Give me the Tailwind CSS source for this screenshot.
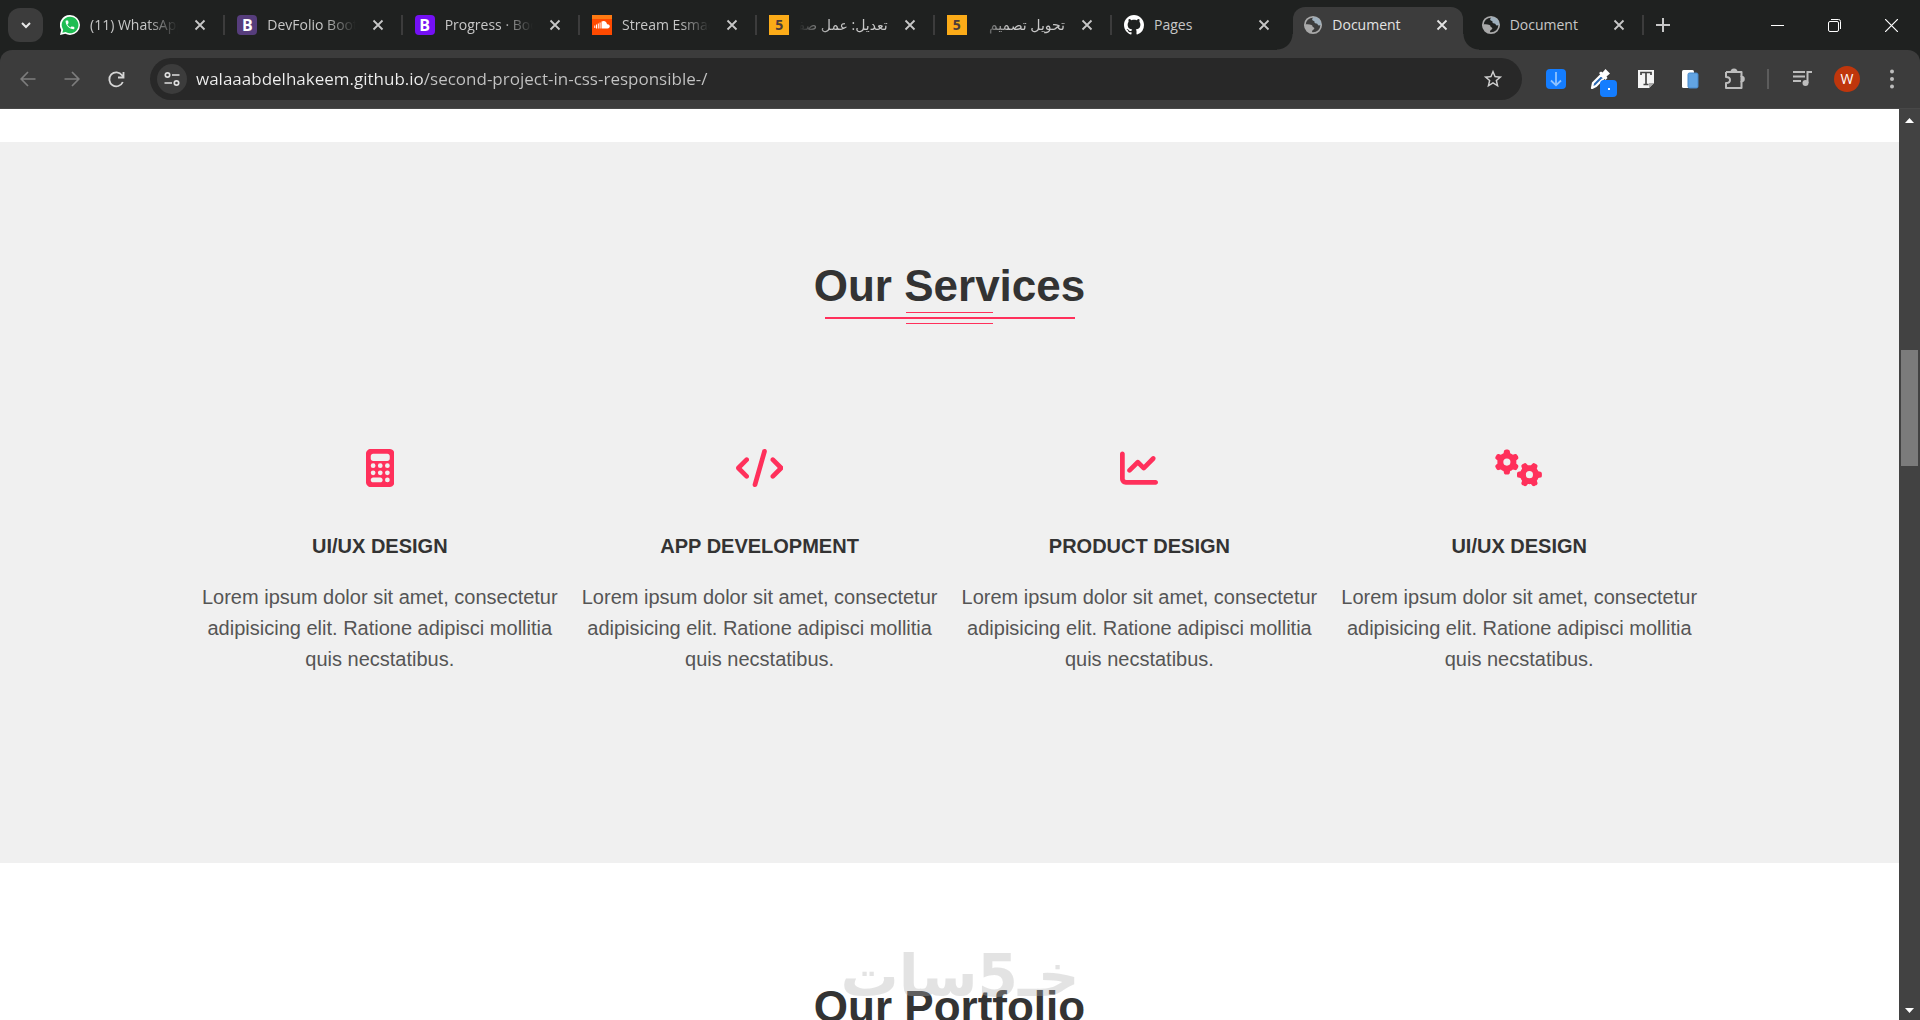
<!DOCTYPE html>
<html lang="en">
<head>
    <meta charset="UTF-8" />
    <meta name="viewport" content="width=device-width, initial-scale=1.0" />
    <title>Document</title>
    <script src="https://cdn.jsdelivr.net/npm/@tailwindcss/browser@4"></script>
</head>
<body class="relative flex h-screen flex-col overflow-hidden bg-white font-['Liberation_Sans',Arial,sans-serif]">

<!-- Shared icons -->
<svg class="hidden">
    <symbol id="x" viewBox="0 0 12 12"><path d="M1.5 1.5l9 9M10.500 1.500l-9 9" fill="none" stroke="currentColor" stroke-width="1.8" /></symbol>
    <symbol id="globe" viewBox="0 0 20 20">
        <circle cx="10" cy="10" r="8.200" fill="none" stroke="currentColor" stroke-width="1.700" />
        <path d="M10.500 2c-1 1.500-1.800 2-1 3.200 1 .8 2.200.3 2 1.800-.1 1.200.8 1.500 2 1.400 1.200 0 1.200 1.800 2.500 2.200l2.200-.6C18.500 5.500 15 2 10.500 2z" fill="#9fb0bd" />
        <path d="M2 9.500c2.500-.3 5-.2 6.500.5 1.500.8.500 1.800 1.800 2.300 1.500.4 1.200 1.700.3 2.200-1.200.7-1.700 1.600-1.600 3.300C5 17.500 1.800 14 2 9.500z" fill="currentColor" />
    </symbol>
    <symbol id="gear" viewBox="0 0 320 352"><path fill-rule="evenodd" d="M308.500 135.300c7.100-6.300 9.900-16.200 6.200-25c-2.300-5.300-4.800-10.500-7.600-15.500L304 89.400c-3-5-6.300-9.900-9.800-14.600c-5.700-7.600-15.700-10.100-24.700-7.100l-28.200 9.300c-10.700-8.800-23-16-36.200-20.900L199 27.100c-1.900-9.300-9.100-16.700-18.500-17.800C173.900 8.400 167.200 8 160.400 8h-.7c-6.800 0-13.500 .4-20.100 1.200c-9.400 1.100-16.600 8.600-18.500 17.800L115 56.100c-13.300 5-25.500 12.100-36.200 20.900L50.500 67.800c-9-3-19-.5-24.700 7.100c-3.500 4.700-6.800 9.600-9.900 14.600l-3 5.300c-2.800 5-5.300 10.200-7.600 15.600c-3.700 8.700-.9 18.600 6.200 25l22.200 19.800C32.600 161.900 32 168.900 32 176s.6 14.100 1.700 20.900L11.500 216.700c-7.100 6.300-9.900 16.200-6.200 25c2.300 5.300 4.800 10.500 7.600 15.600l3 5.200c3 5.100 6.300 9.900 9.900 14.600c5.700 7.600 15.700 10.100 24.700 7.100l28.200-9.300c10.700 8.800 23 16 36.200 20.900l6.100 29.100c1.900 9.300 9.100 16.700 18.500 17.800c6.700 .8 13.500 1.200 20.400 1.200s13.700-.4 20.400-1.200c9.400-1.100 16.600-8.600 18.500-17.800l6.100-29.100c13.300-5 25.500-12.100 36.200-20.900l28.200 9.300c9 3 19 .5 24.700-7.100c3.500-4.700 6.800-9.500 9.800-14.600l3.100-5.400c2.800-5 5.300-10.200 7.600-15.500c3.700-8.700 .9-18.600-6.200-25l-22.200-19.800c1.100-6.800 1.700-13.800 1.700-20.900s-.6-14.100-1.700-20.900l22.200-19.800zM112 176a48 48 0 1 1 96 0 48 48 0 1 1 -96 0z" /></symbol>
</svg>

<!-- Tab strip -->
<header class="flex h-[50px] shrink-0 items-center bg-[#1f2120] font-['Open_Sans','Noto_Sans','DejaVu_Sans',sans-serif] text-sm text-[#c7c7c7]">
    <button aria-label="Search tabs" class="ml-2 mr-[5px] flex h-[34px] w-[35px] shrink-0 items-center justify-center rounded-xl bg-[#3c3c3c]">
        <svg class="size-3" viewBox="0 0 12 12" fill="none" stroke="#e8e8e8" stroke-width="2"><path d="M2 4l4 4 4-4" /></svg>
    </button>
    <nav class="grid h-full w-[1596px] grid-cols-9 items-center">
        <div class="flex h-5 items-center border-r-2 border-[#3c3c3c] pl-3 pr-[17px]">
            <svg class="size-5 shrink-0" viewBox="0 0 24 24"><path d="M12 0a12 12 0 0 1 0 24c-2.100 0-4-.5-5.700-1.400L0 24l1.500-6A12 12 0 0 1 12 0z" fill="#fff" /><path d="M12 2a10 10 0 1 1-5.300 18.400L2.800 21.300l1-3.700A10 10 0 0 1 12 2z" fill="#1fbd53" /><path transform="translate(5 5) scale(.58)" d="M6.620 10.790c1.440 2.830 3.760 5.140 6.590 6.590l2.200-2.200c.27-.27.67-.36 1.020-.24 1.120.37 2.330.57 3.570.57.55 0 1 .45 1 1V20c0 .55-.45 1-1 1-9.390 0-17-7.610-17-17 0-.55.45-1 1-1h3.500c.55 0 1 .45 1 1 0 1.250.2 2.450.57 3.570.11.35.03.74-.25 1.020l-2.200 2.200z" fill="#fff" /></svg>
            <a href="#" class="ml-[10px] min-w-0 flex-1 overflow-hidden whitespace-nowrap [mask-image:linear-gradient(to_right,#000_65%,transparent)]">(11) WhatsApp</a>
            <button aria-label="Close tab" class="ml-4"><svg class="size-3"><use href="#x" /></svg></button>
        </div>
        <div class="flex h-5 items-center border-r-2 border-[#3c3c3c] pl-3 pr-[17px]">
            <span class="flex size-5 shrink-0 items-center justify-center rounded-sm bg-[#563d7c] text-base font-bold text-white">B</span>
            <a href="#" class="ml-[10px] min-w-0 flex-1 overflow-hidden whitespace-nowrap [mask-image:linear-gradient(to_right,#000_65%,transparent)]">DevFolio Bootstrap</a>
            <button aria-label="Close tab" class="ml-4"><svg class="size-3"><use href="#x" /></svg></button>
        </div>
        <div class="flex h-5 items-center border-r-2 border-[#3c3c3c] pl-3 pr-[17px]">
            <span class="flex size-5 shrink-0 items-center justify-center rounded-sm bg-[#7410f5] text-base font-bold text-white">B</span>
            <a href="#" class="ml-[10px] min-w-0 flex-1 overflow-hidden whitespace-nowrap [mask-image:linear-gradient(to_right,#000_65%,transparent)]">Progress · Bootstrap</a>
            <button aria-label="Close tab" class="ml-4"><svg class="size-3"><use href="#x" /></svg></button>
        </div>
        <div class="flex h-5 items-center border-r-2 border-[#3c3c3c] pl-3 pr-[17px]">
            <svg class="size-5 shrink-0" viewBox="0 0 20 20"><path d="M0 0h20v20H0z" fill="#ff4a00" /><path d="M0 0h20v4H0z" fill="#ff7a12" /><path d="M9.500 6.500c3-1.500 5.300.3 5.500 2.700 1.700-.3 2.800.8 2.800 2s-.9 2.200-2.200 2.200H9.500zM7.600 7.500h1v5.900h-1zM5.800 8.500h1v4.900h-1zM4 9.500h1v3.900H4zM2.300 10.500h1v2.500h-1z" fill="#fff" /></svg>
            <a href="#" class="ml-[10px] min-w-0 flex-1 overflow-hidden whitespace-nowrap [mask-image:linear-gradient(to_right,#000_65%,transparent)]">Stream Esmaeel</a>
            <button aria-label="Close tab" class="ml-4"><svg class="size-3"><use href="#x" /></svg></button>
        </div>
        <div class="flex h-5 items-center border-r-2 border-[#3c3c3c] pl-3 pr-[17px]">
            <span class="flex size-5 shrink-0 items-center justify-center bg-[#fbab18] text-sm font-bold text-[#4a3b3b]">5</span>
            <a href="#" dir="rtl" class="ml-[10px] min-w-0 flex-1 overflow-hidden whitespace-nowrap [mask-image:linear-gradient(to_left,#000_65%,transparent)]">تعديل: عمل صفحة</a>
            <button aria-label="Close tab" class="ml-4"><svg class="size-3"><use href="#x" /></svg></button>
        </div>
        <div class="flex h-5 items-center border-r-2 border-[#3c3c3c] pl-3 pr-[17px]">
            <span class="flex size-5 shrink-0 items-center justify-center bg-[#fbab18] text-sm font-bold text-[#4a3b3b]">5</span>
            <a href="#" dir="rtl" class="ml-[10px] min-w-0 flex-1 overflow-hidden whitespace-nowrap [mask-image:linear-gradient(to_left,#000_65%,transparent)]">تحويل تصميم</a>
            <button aria-label="Close tab" class="ml-4"><svg class="size-3"><use href="#x" /></svg></button>
        </div>
        <div class="flex h-5 items-center pl-3 pr-[19px]">
            <svg class="size-5 shrink-0" viewBox="0 0 16 16" fill="#fff"><path d="M8 0C3.580 0 0 3.580 0 8c0 3.540 2.290 6.530 5.470 7.590.4.07.55-.17.55-.38 0-.19-.01-.82-.01-1.490-2.010.37-2.530-.49-2.690-.94-.09-.23-.48-.94-.82-1.130-.28-.15-.68-.52-.01-.53.63-.01 1.080.58 1.230.82.72 1.210 1.870.87 2.330.66.07-.52.28-.87.51-1.070-1.780-.2-3.640-.89-3.640-3.950 0-.87.31-1.590.82-2.150-.08-.2-.36-1.020.08-2.120 0 0 .67-.21 2.200.82.64-.18 1.320-.27 2-.27s1.360.09 2 .27c1.530-1.040 2.200-.82 2.200-.82.44 1.100.16 1.920.08 2.120.51.56.82 1.270.82 2.150 0 3.070-1.870 3.750-3.650 3.950.29.25.54.73.54 1.480 0 1.070-.01 1.930-.01 2.200 0 .21.15.46.55.38A8.010 8.010 0 0 0 16 8c0-4.420-3.580-8-8-8z" /></svg>
            <a href="#" class="ml-[10px] min-w-0 flex-1 overflow-hidden whitespace-nowrap">Pages</a>
            <button aria-label="Close tab" class="ml-4"><svg class="size-3"><use href="#x" /></svg></button>
        </div>
        <!-- Active tab, with the curved feet on both sides -->
        <div class="relative mx-1 flex h-[43px] items-center self-end rounded-t-xl bg-[#3c3c3c] pb-2 pl-[10px] pr-[15px] text-[#e3e3e3] before:absolute before:-left-4 before:bottom-0 before:size-4 before:bg-[radial-gradient(circle_at_0_0,transparent_15px,#3c3c3c_16px)] after:absolute after:-right-4 after:bottom-0 after:size-4 after:bg-[radial-gradient(circle_at_100%_0,transparent_15px,#3c3c3c_16px)]">
            <svg class="size-5 shrink-0 text-[#a9a9a9]"><use href="#globe" /></svg>
            <a href="#" class="ml-[9px] min-w-0 flex-1 overflow-hidden whitespace-nowrap">Document</a>
            <button aria-label="Close tab" class="ml-4"><svg class="size-3"><use href="#x" /></svg></button>
        </div>
        <div class="flex h-5 items-center border-r-2 border-[#3c3c3c] pl-[14px] pr-[17px]">
            <svg class="size-5 shrink-0 text-[#a9a9a9]"><use href="#globe" /></svg>
            <a href="#" class="ml-[9px] min-w-0 flex-1 overflow-hidden whitespace-nowrap">Document</a>
            <button aria-label="Close tab" class="ml-4"><svg class="size-3"><use href="#x" /></svg></button>
        </div>
    </nav>
    <button aria-label="New tab" class="ml-3">
        <svg class="size-[14px]" viewBox="0 0 14 14" stroke="currentColor" stroke-width="2"><path d="M7 0v14M0 7h14" /></svg>
    </button>
    <div class="ml-auto flex items-center gap-11 pr-[22px] text-white">
        <button aria-label="Minimize"><svg class="size-[13px]" viewBox="0 0 13 13" stroke="currentColor"><path d="M0 6.500h13" /></svg></button>
        <button aria-label="Restore"><svg class="size-[13px]" viewBox="0 0 13 13" fill="none" stroke="currentColor"><rect x=".5" y="2.500" width="10" height="10" rx="1.500" /><path d="M3 .5h7.500a2 2 0 0 1 2 2V10" /></svg></button>
        <button aria-label="Close"><svg class="size-[13px]" viewBox="0 0 13 13" stroke="currentColor" stroke-width="1.200"><path d="M0 0l13 13M13 0L0 13" /></svg></button>
    </div>
</header>

<!-- Toolbar -->
<div class="shrink-0 bg-[#1f2120]">
    <div class="flex h-[59px] items-center rounded-t-xl border-b border-[#484848] bg-[#3c3c3c] pl-5 pr-5">
        <div class="flex gap-7">
            <button aria-label="Back" class="text-[#7d7d7d]"><svg class="size-4" viewBox="0 0 16 16" fill="none" stroke="currentColor" stroke-width="1.700"><path d="M15.500 8H1.500M8 1L1.200 8 8 15" /></svg></button>
            <button aria-label="Forward" class="text-[#7d7d7d]"><svg class="size-4" viewBox="0 0 16 16" fill="none" stroke="currentColor" stroke-width="1.700"><path d="M.5 8h14M8 1l6.800 7L8 15" /></svg></button>
            <button aria-label="Reload" class="text-[#d6d6d6]"><svg class="size-[17px]" viewBox="0 0 17 17" fill="none" stroke="currentColor" stroke-width="1.800"><path d="M14.800 11A7 7 0 1 1 14 4.200l1.500 1.800M15.500 1v5.500H10" /></svg></button>
        </div>
        <div class="ml-[25px] flex h-[42px] flex-1 items-center rounded-full bg-[#282828] pl-[7px] pr-[18px]">
            <button aria-label="Site information" class="flex size-[30px] items-center justify-center rounded-full bg-[#3c3c3c] text-[#dedede]">
                <svg class="size-4" viewBox="0 0 16 16" fill="none" stroke="currentColor" stroke-width="1.700"><circle cx="3.500" cy="4" r="2.200" /><path d="M8 4h7.500M.5 12H8" /><circle cx="12.500" cy="12" r="2.200" /></svg>
            </button>
            <input type="text" aria-label="Address" value="walaaabdelhakeem.github.io/second-project-in-css-responsible-/" class="ml-[9px] min-w-0 flex-1 bg-linear-to-r from-[#f0f0f0] from-[227px] to-[#c4c4c4] to-[227px] bg-clip-text font-['Open_Sans','Noto_Sans',sans-serif] text-[17px] text-transparent outline-none" />
            <button aria-label="Bookmark this page" class="text-[#cfcfcf]"><svg class="size-[22px]" viewBox="0 0 24 24" fill="currentColor"><path d="M22 9.240l-7.190-.62L12 2 9.190 8.630 2 9.240l5.460 4.730L5.820 21 12 17.270 18.180 21l-1.630-7.030L22 9.240zM12 15.400l-3.760 2.270 1-4.280-3.320-2.880 4.380-.38L12 6.100l1.710 4.040 4.380.38-3.320 2.880 1 4.280L12 15.400z" /></svg></button>
        </div>
        <div class="ml-6 flex items-center gap-6 text-[#bdbdbd]">
            <button aria-label="Downloader"><svg class="size-5" viewBox="0 0 20 20"><rect width="20" height="20" rx="4" fill="#147dff" /><path d="M10 3v13M5 11.500l5 4.800 5-4.800" fill="none" stroke="#8fc3ff" stroke-width="1.800" /></svg></button>
            <button aria-label="Color picker" class="relative size-[22px]">
                <svg class="size-5" viewBox="0 0 20 20"><path d="M2 19l1-5 8-8 3 3-8 8z" fill="#2867b2" stroke="#fff" stroke-width="2.200" stroke-linejoin="round" /><path d="M9 4l2-1.500 1.500 1L15.500 0l4.500 4.500-3.500 3 1 1.500-2 2z" fill="#fff" /></svg>
                <span class="absolute left-[10px] top-3 flex size-[17px] items-center justify-center rounded bg-[#147dff]"><span class="size-[2px] bg-white"></span></span>
            </button>
            <button aria-label="Fonts"><svg class="size-5" viewBox="0 0 20 20"><path d="M2 1h16v13l-5 5H2z" fill="#f4f4f4" /><path d="M13 19v-5h5z" fill="#aaa" /><path d="M5 6V3.500h10V6M10 3.500V15M7.500 15.500h5" fill="none" stroke="#444" stroke-width="1.700" /></svg></button>
            <button aria-label="Responsive viewer"><svg class="size-5" viewBox="0 0 20 20"><rect x="2" y="1" width="12" height="18" rx="1.500" fill="#fff" /><rect x="8" y="4" width="10" height="15" rx="1.500" fill="#62a4e3" stroke="#4688ca" /></svg></button>
            <button aria-label="Extensions"><svg class="size-[22px]" viewBox="0 0 22 22" fill="none" stroke="currentColor" stroke-width="2"><path d="M2 4h15.500v5M17.500 13v7H2v-5c2.500 0 4-1 4-3s-1.500-3-4-3V4" stroke-linejoin="round" /><path d="M7.500 4a2.500 2.500 0 0 1 5 0zM17.500 8.800a2.300 2.300 0 0 1 0 4.600z" fill="currentColor" /></svg></button>
        </div>
        <span class="ml-[21px] h-5 w-[2px] bg-[#5c5c5c]"></span>
        <div class="ml-[23px] flex items-center text-[#bdbdbd]">
            <button aria-label="Media controls"><svg class="size-[22px]" viewBox="0 0 22 22"><path d="M1 4h12M1 8.500h12M1 13h8" stroke="currentColor" stroke-width="1.800" /><path d="M15.500 15V4H20" fill="none" stroke="currentColor" stroke-width="2" /><circle cx="13.500" cy="15" r="3" fill="currentColor" /></svg></button>
            <button aria-label="Profile" class="ml-5 flex size-[26px] items-center justify-center rounded-full bg-[#bf360c] font-['Open_Sans',sans-serif] text-sm text-white">W</button>
            <button aria-label="Menu" class="ml-6"><svg class="h-5 w-4" viewBox="0 0 16 20" fill="currentColor"><circle cx="8" cy="2.500" r="2" /><circle cx="8" cy="10" r="2" /><circle cx="8" cy="17.500" r="2" /></svg></button>
        </div>
    </div>
</div>

<div class="flex min-h-0 flex-1">
    <main class="min-w-0 flex-1 overflow-hidden pt-[33px] text-center text-[#333]">

        <!-- Services -->
        <section class="bg-[#f0f0f0] pb-[188px] pt-[119px]">
            <h2 class="text-[44px] font-bold leading-[50px]">Our Services</h2>
            <div class="mt-px flex flex-col items-center gap-1">
                <span class="h-px w-[87px] bg-[#ff305b]"></span>
                <span class="h-[2px] w-[250px] bg-[#ff305b]"></span>
                <span class="h-px w-[87px] bg-[#ff305b]"></span>
            </div>
            <div class="mx-auto mt-[125px] grid w-4/5 grid-cols-4">
                <article class="px-2">
                    <svg class="mx-auto h-[38px] fill-[#ff305b]" viewBox="0 0 384 512"><path d="M64 0C28.700 0 0 28.700 0 64V448c0 35.300 28.700 64 64 64H320c35.300 0 64-28.700 64-64V64c0-35.300-28.700-64-64-64H64zM96 64H288c17.700 0 32 14.300 32 32v32c0 17.700-14.300 32-32 32H96c-17.700 0-32-14.300-32-32V96c0-17.700 14.300-32 32-32zm32 160a32 32 0 1 1 -64 0 32 32 0 1 1 64 0zM96 352a32 32 0 1 1 0-64 32 32 0 1 1 0 64zM64 416c0-17.700 14.300-32 32-32h96c17.700 0 32 14.300 32 32s-14.300 32-32 32H96c-17.700 0-32-14.300-32-32zM192 256a32 32 0 1 1 0-64 32 32 0 1 1 0 64zm32 64a32 32 0 1 1 -64 0 32 32 0 1 1 64 0zm64-64a32 32 0 1 1 0-64 32 32 0 1 1 0 64zm32 64a32 32 0 1 1 -64 0 32 32 0 1 1 64 0zM288 448a32 32 0 1 1 0-64 32 32 0 1 1 0 64z" /></svg>
                    <h3 class="mt-11 text-xl font-bold uppercase leading-[30px]">UI/UX Design</h3>
                    <p class="mt-[21px] text-xl leading-[31px] text-[#555]">Lorem ipsum dolor sit amet, consectetur adipisicing elit. Ratione adipisci mollitia quis necstatibus.</p>
                </article>
                <article class="px-2">
                    <svg class="mx-auto h-[38px] fill-[#ff305b]" viewBox="0 0 640 512"><path d="M392.800 1.200c-17-4.900-34.700 5-39.600 22l-128 448c-4.900 17 5 34.700 22 39.600s34.700-5 39.600-22l128-448c4.900-17-5-34.700-22-39.600zm80.600 120.100c-12.500 12.500-12.500 32.800 0 45.300L562.700 256l-89.400 89.400c-12.500 12.500-12.500 32.800 0 45.300s32.800 12.500 45.300 0l112-112c12.500-12.500 12.500-32.800 0-45.300l-112-112c-12.500-12.500-32.800-12.500-45.300 0zm-306.700 0c-12.500-12.500-32.800-12.500-45.300 0l-112 112c-12.500 12.500-12.500 32.800 0 45.300l112 112c12.500 12.500 32.800 12.500 45.300 0s12.500-32.800 0-45.300L77.300 256l89.400-89.400c12.500-12.500 12.500-32.800 0-45.300z" /></svg>
                    <h3 class="mt-11 text-xl font-bold uppercase leading-[30px]">App Development</h3>
                    <p class="mt-[21px] text-xl leading-[31px] text-[#555]">Lorem ipsum dolor sit amet, consectetur adipisicing elit. Ratione adipisci mollitia quis necstatibus.</p>
                </article>
                <article class="px-2">
                    <svg class="mx-auto h-[38px] fill-[#ff305b]" viewBox="0 0 512 512"><path d="M64 64c0-17.700-14.300-32-32-32S0 46.300 0 64V400c0 44.200 35.800 80 80 80H480c17.700 0 32-14.300 32-32s-14.300-32-32-32H80c-8.800 0-16-7.200-16-16V64zm406.600 86.600c12.500-12.500 12.500-32.800 0-45.300s-32.800-12.500-45.300 0L320 210.700l-57.400-57.400c-12.500-12.500-32.800-12.500-45.300 0l-112 112c-12.500 12.500-12.500 32.800 0 45.300s32.800 12.500 45.300 0L240 221.300l57.400 57.400c12.500 12.500 32.800 12.500 45.300 0l128-128z" /></svg>
                    <h3 class="mt-11 text-xl font-bold uppercase leading-[30px]">Product Design</h3>
                    <p class="mt-[21px] text-xl leading-[31px] text-[#555]">Lorem ipsum dolor sit amet, consectetur adipisicing elit. Ratione adipisci mollitia quis necstatibus.</p>
                </article>
                <article class="px-2">
                    <svg class="mx-auto h-[38px] fill-[#ff305b]" viewBox="0 0 640 512"><use href="#gear" width="320" height="352" /><g transform="translate(640 186) rotate(90)"><use href="#gear" width="320" height="352" /></g></svg>
                    <h3 class="mt-11 text-xl font-bold uppercase leading-[30px]">UI/UX Design</h3>
                    <p class="mt-[21px] text-xl leading-[31px] text-[#555]">Lorem ipsum dolor sit amet, consectetur adipisicing elit. Ratione adipisci mollitia quis necstatibus.</p>
                </article>
            </div>
        </section>

        <!-- Portfolio -->
        <section class="bg-white pt-[119px]">
            <h2 class="text-[44px] font-bold leading-[50px]">Our Portfolio</h2>
        </section>
    </main>

    <!-- Scrollbar -->
    <aside class="flex w-[21px] shrink-0 flex-col items-center bg-[#424242] pb-[7px] pt-[9px]">
        <svg class="h-[5px] w-[9px]" viewBox="0 0 9 5" fill="#fff"><path d="M0 5l4.500-5L9 5z" /></svg>
        <span class="mt-[227px] h-[116px] w-[17px] bg-[#7b7b7b]"></span>
        <svg class="mt-auto h-[5px] w-[9px]" viewBox="0 0 9 5" fill="#fff"><path d="M0 0l4.500 5L9 0z" /></svg>
    </aside>
</div>

<!-- Watermark -->
<div class="pointer-events-none absolute inset-x-0 bottom-0 flex justify-center pb-1 opacity-35">
    <span dir="rtl" class="font-['DejaVu_Sans',sans-serif] text-[58px] font-bold leading-[80px] text-[#b2b2b2]">خـ5سات</span>
</div>

</body>
</html>
